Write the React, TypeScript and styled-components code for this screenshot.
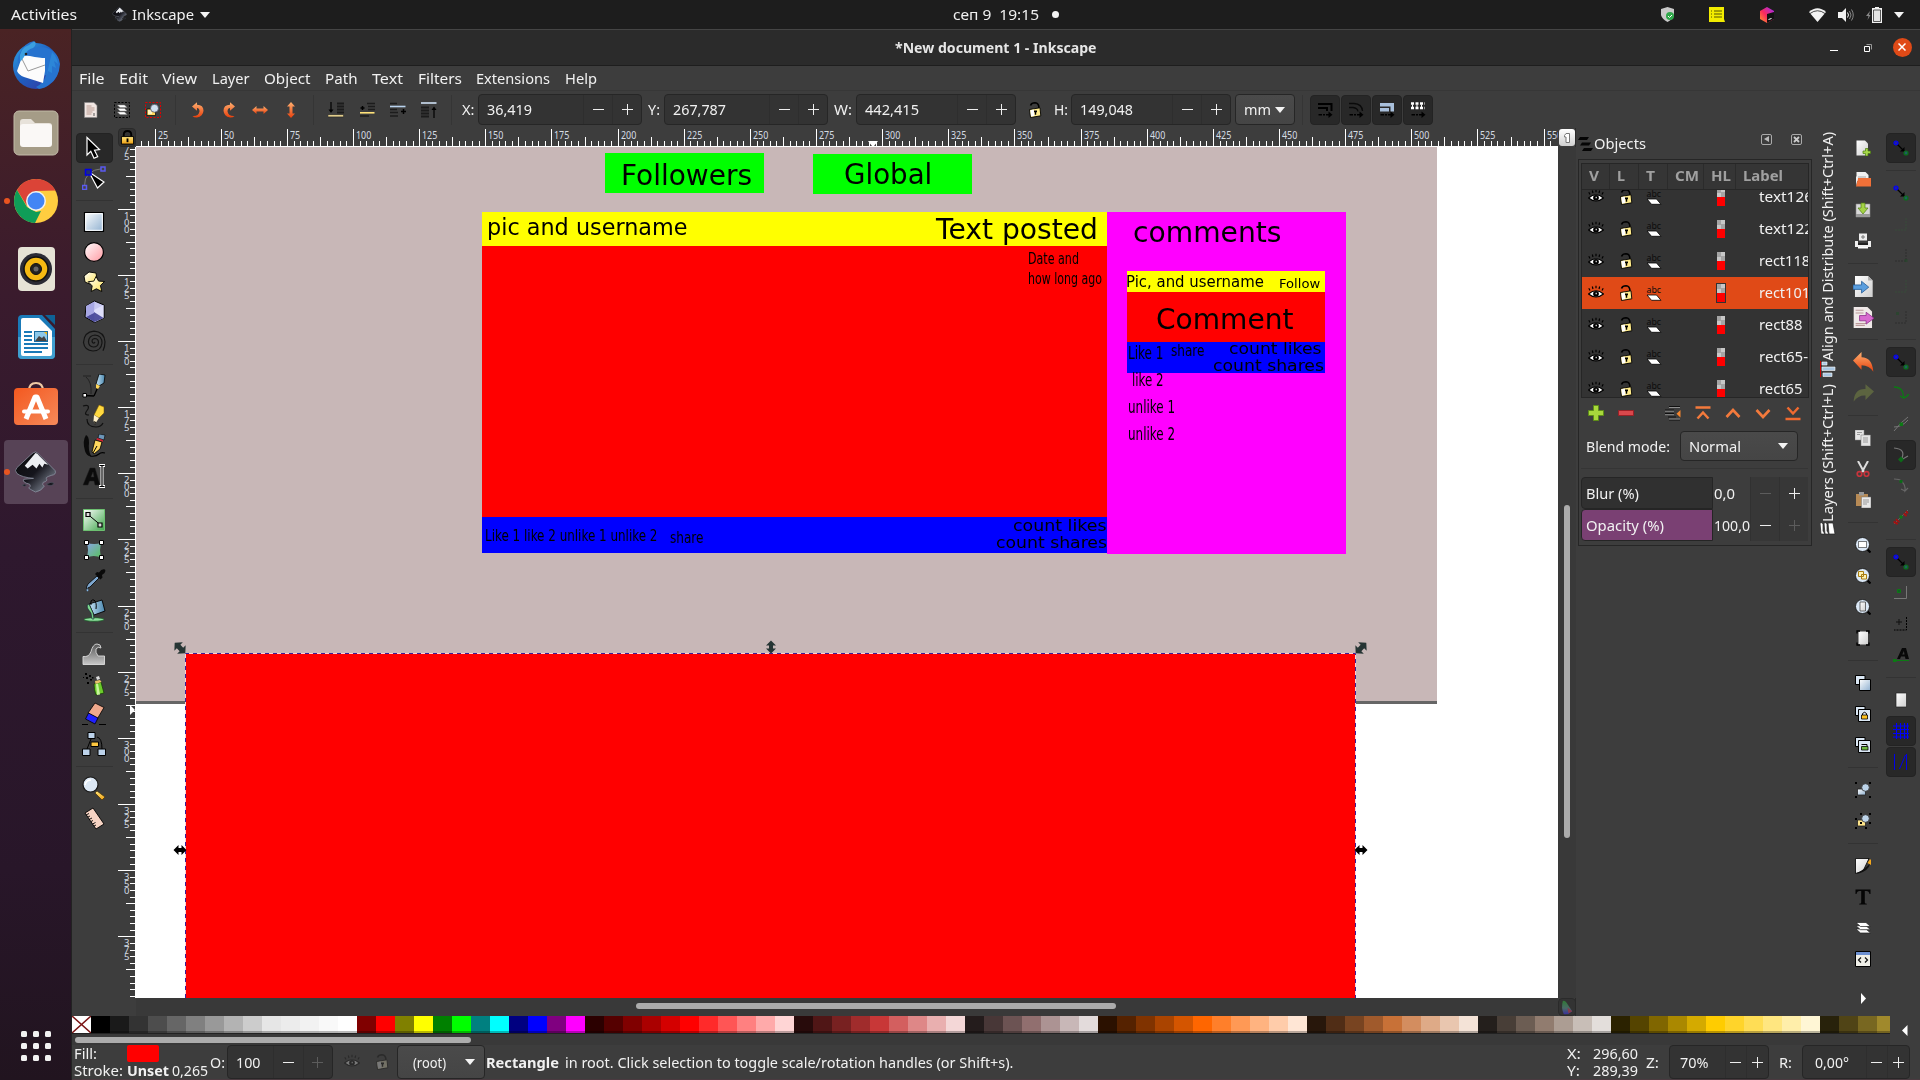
import React, { ReactNode, useLayoutEffect, useRef, useState } from 'react';
import styled, { createGlobalStyle, css } from 'styled-components';

const ui = '"Noto Sans", "Open Sans", sans-serif';
const line = '#262626';

const Global = createGlobalStyle`
  *, *::before, *::after { box-sizing: border-box; }
  html, body { margin: 0; padding: 0; overflow: hidden; background: #3d3d3d; }
  svg { display: block; flex: none; }
`;

/* ---------- text fitted to a given width ---------- */

const FitBox = styled.span<{ $w: number; $size: number; $color: string; $bold?: boolean; $sans?: string }>`
  display: block;
  flex: none;
  width: ${p => p.$w}px;
  font: ${p => (p.$bold ? 700 : 400)} ${p => p.$size}px/1.25 ${p => p.$sans || ui};
  color: ${p => p.$color};
  white-space: pre;
`;
const FitInner = styled.span`
  display: inline-block;
  transform-origin: 0 50%;
`;

type FitProps = { w: number; size?: number; color?: string; bold?: boolean; sans?: string; children: ReactNode };

function Fit({ w, size = 14.5, color = '#f1f1f1', bold, sans, children }: FitProps) {
  const ref = useRef<HTMLSpanElement>(null);
  const [k, setK] = useState(1);
  useLayoutEffect(() => {
    if (ref.current) setK(w / parseFloat(getComputedStyle(ref.current).width));
  }, [w, children]);
  return (
    <FitBox $w={w} $size={size} $color={color} $bold={bold} $sans={sans}>
      <FitInner ref={ref} style={{ transform: `scaleX(${k})` }}>{children}</FitInner>
    </FitBox>
  );
}

/* ---------- icons ---------- */

const K = '#000';
const Defs = () => (
  <svg width="0" height="0" style={{ position: 'absolute' }}>
    <defs>
      <linearGradient id="gBlue" x1="0" y1="0" x2="1" y2="1"><stop offset="0" stopColor="#fff" /><stop offset="1" stopColor="#8fb0d0" /></linearGradient>
      <linearGradient id="gSky" x1="0" y1="0" x2="1" y2="0"><stop offset="0" stopColor="#c4e2f4" /><stop offset="1" stopColor="#4a86ad" /></linearGradient>
      <linearGradient id="gPink" x1="0" y1="0" x2="1" y2="1"><stop offset="0" stopColor="#fff" /><stop offset="1" stopColor="#ff9aa2" /></linearGradient>
      <linearGradient id="gYel" x1="0" y1="0" x2="1" y2="1"><stop offset="0" stopColor="#fff" /><stop offset="1" stopColor="#ffe24e" /></linearGradient>
      <linearGradient id="gOr" x1="0" y1="0" x2="0" y2="1"><stop offset="0" stopColor="#ffb070" /><stop offset="1" stopColor="#e8400c" /></linearGradient>
      <linearGradient id="gGrn" x1="0" y1="0" x2="1" y2="1"><stop offset="0" stopColor="#fff" /><stop offset="1" stopColor="#3fa54b" /></linearGradient>
      <linearGradient id="gMesh" x1="0" y1="0" x2="1" y2="1"><stop offset="0" stopColor="#8aa5e8" /><stop offset="1" stopColor="#58c15c" /></linearGradient>
      <linearGradient id="gGold" x1="0" y1="0" x2="0" y2="1"><stop offset="0" stopColor="#ffe680" /><stop offset="1" stopColor="#f0a010" /></linearGradient>
      <linearGradient id="gGrey" x1="0" y1="0" x2="0" y2="1"><stop offset="0" stopColor="#555" /><stop offset="1" stopColor="#c8c8c8" /></linearGradient>
      <linearGradient id="gDoc" x1="0" y1="0" x2="1" y2="1"><stop offset="0" stopColor="#fff" /><stop offset="1" stopColor="#cfcfcf" /></linearGradient>
      <linearGradient id="gInk" x1="0" y1="0" x2="1" y2="1"><stop offset="0" stopColor="#0a0a0c" /><stop offset=".5" stopColor="#15151c" /><stop offset="1" stopColor="#9aa3b3" /></linearGradient>
      <linearGradient id="gBird" x1="0" y1="0" x2="1" y2="1"><stop offset="0" stopColor="#2ea2e6" /><stop offset=".5" stopColor="#1f5cbe" /><stop offset="1" stopColor="#3a2f9a" /></linearGradient>
      <linearGradient id="gShop" x1="0" y1="0" x2="1" y2="1"><stop offset="0" stopColor="#f4581f" /><stop offset="1" stopColor="#f58a5a" /></linearGradient>
      <linearGradient id="gJb" x1="0" y1="1" x2="1" y2="0"><stop offset="0" stopColor="#ff9a2a" /><stop offset=".45" stopColor="#fb2a5c" /><stop offset="1" stopColor="#9a2bff" /></linearGradient>
      <linearGradient id="gCms" x1="0" y1="0" x2="0" y2="1"><stop offset="0" stopColor="#2f7a35" /><stop offset=".55" stopColor="#4a6a66" /><stop offset="1" stopColor="#3a2f9a" /></linearGradient>
    </defs>
  </svg>
);

const tool: Record<string, ReactNode> = {
  select: <path d="M5 1.500v17.500l3.800-3.700 3.200 7 3.700-1.700-3.200-6.400 5-.6z" fill={K} stroke="#fff" strokeWidth="1.200" />,
  node: <><path d="M2.500 20Q2 4 21 2.500" fill="none" stroke="#777" /><path d="M7 6l15 10-6.500 6z" fill={K} stroke="#fff" strokeWidth="1.200" /><path d="M3.500 3.500h5.500v5.500h-5.500z" fill="#22306e" stroke="#0000e8" strokeWidth="1.500" /><path d="M19 1h4v4h-4zM.5 19.500h4v4h-4z" fill="#444" stroke="#5a5af0" strokeWidth="1.500" /></>,
  rect: <><path d="M2.500 2.500h19v19h-19z" fill="url(#gBlue)" stroke={K} strokeWidth="1.200" /><path d="M3.700 3.700h16.600v16.600H3.700z" fill="none" stroke="#fff" /></>,
  ellipse: <circle cx="12" cy="12" r="9.400" fill="url(#gPink)" stroke={K} strokeWidth="1.200" />,
  star: <><path d="M7 2l7 1 1 6-5 6-7-3-1-6z" fill="url(#gYel)" stroke={K} strokeWidth=".9" /><path d="M14 6.500l2.600 4.600 6 .4-4.200 4 1.400 6-5.400-2.700-5.200 2.700 1-5.600-4-4.200 5.600-.6z" fill="url(#gYel)" stroke={K} strokeWidth=".9" /></>,
  cube: <><path d="M12.500 1l9.500 4v13l-9.500 4.500L3 17 4 6z" fill="#c9c9f2" stroke={K} /><path d="M12 10l9.500-5v13l-9 4.200z" fill="#dedefa" /><path d="M12 12l9.500 6-9 4L4 17z" fill="#30308a" opacity=".8" /><path d="M4 6l8.500-4.500L12 13l-8 4z" fill="#a7a7e4" /></>,
  spiral: <path d="M13 12Q12 14 10.500 12.500 9 9.500 12.500 8.500q4 0 4 4-.5 4.500-5 4.500-5-.5-5-5.500.5-6 6.500-6.500 7 .5 7 8-1 8-9 8Q2.500 20.500 1.500 12.500 2 2 12 1.200q10 .5 11 10.500 0 5-2 9" fill="none" stroke="#141414" strokeWidth="1.200" />,
  bezier: <><path d="M1 2h8M4 3q6 5 5 17" fill="none" stroke="#222" /><path d="M2.500 21.500L12 22M12 22l4-9" stroke={K} strokeWidth="1.300" fill="none" /><path d="M1 19.500h3.500v3.500H1z" fill="#fff" stroke={K} /><path d="M17 0l6 1-1 8-5 3-3-2z" fill="url(#gSky)" stroke={K} strokeWidth=".8" /><path d="M14 10l4 2-2 3-2-1z" fill="#ffd75a" /></>,
  pencil: <><path d="M1 2q7-2 5 3c-3 4-4 6 1 6M5 15q0 8 9 8 5 0 7-4" fill="none" stroke="#111" strokeWidth="1.200" /><path d="M17 1l5 2v6l-4-1z" fill="#ff9a10" /><path d="M17 1l-5 10 5 3 5-5V3z" fill="#ffd940" stroke="#6b4d00" strokeWidth=".5" /><path d="M12 11l5 3-4 6-1.500-3z" fill="#fff0c8" /><path d="M12 17l2 1-1 3z" fill={K} /></>,
  calligraphy: <><path d="M4 1Q0 7 3 17q2 6 6 5-3-6-2-13Q7 2 4 1z" fill="#0a0a0a" /><path d="M8 22q6 1 9-2 2-2 6-1" fill="none" stroke={K} strokeWidth="1.200" /><path d="M17 0l6 1-1 5-6-2z" fill="#6d96b8" stroke={K} strokeWidth=".6" /><path d="M15 4l6 2-.5 2-6-2z" fill="#d02030" /><path d="M13 6l7 2-2 7-6 5-2-2z" fill="#ffd95e" stroke={K} strokeWidth=".8" /><path d="M11 19l4-7" stroke={K} /></>,
  text: <><path d="M1 21L8 4h5l5 17h-5l-1-4H7.500l-1.500 4zM9 13h3l-1-5z" fill="#0b0b0b" stroke="#222" strokeWidth=".5" /><path d="M17 1.500h6M17 22.500h6M20 2v20" stroke="#fff" strokeWidth="3" /><path d="M17.500 1.500h5M17.500 22.500h5M20 2v20" stroke={K} strokeWidth="1.200" /></>,
  gradient: <><path d="M1.500 1.500h21v21h-21z" fill="url(#gGrn)" stroke="#6cc070" /><path d="M6 6.500l12 10" stroke={K} /><path d="M4 4.500h4v4H4zM16 15h4v4h-4z" fill="#ddd" stroke={K} strokeWidth="1.200" /></>,
  mesh: <><path d="M4.500 4.500q8 3 15 0-3 8 0 15-8-3-15 0 3-8 0-15z" fill="url(#gMesh)" /><path d="M2.500 2.500h4v4h-4zM17.500 2.500h4v4h-4zM2.500 17.500h4v4h-4zM17.500 17.500h4v4h-4z" fill="#fff" stroke={K} /></>,
  dropper: <><path d="M15 8l2 2-9 9q-3 1-3 2l-.5-2 1.500-3z" fill="#7fa8d0" stroke={K} strokeWidth=".8" /><path d="M13 6l2-2 2 .5Q20 0 23 1.500q1.500 3-3 5.500l.5 2.500-2 2z" fill="#0a0a0a" /><path d="M5.500 20q-2 3 0 3.500 2-.5 0-3.500z" fill="#8fc1ee" stroke="#234" strokeWidth=".4" /></>,
  bucket: <><ellipse cx="12" cy="21.500" rx="10" ry="1.800" fill="#8ee29e" stroke="#1d5e2a" strokeWidth=".8" /><path d="M7 6l13-4 3 11-11 4z" fill="url(#gSky)" stroke={K} strokeWidth=".9" /><path d="M7 6q-3 1-1 5l3 4 1 6h2l-1-6z" fill="#7edb8f" stroke="#123" strokeWidth=".6" /><path d="M9 7q-1-6 3-5 3 2 2 9" fill="none" stroke={K} /></>,
  tweak: <path d="M1 22.500v-8q6 1 8-5Q11 2 15 2q4 0 4 4-3-2-5 1-1 3 2 7h6.500v8.500z" fill="url(#gGrey)" stroke="#ddd" strokeWidth=".9" />,
  spray: <><path d="M12 12l7-2 3 11-8 2q-2-5-2-11z" fill="#6ccb2c" stroke="#173d05" strokeWidth=".8" /><path d="M14 12l2-.5 2 11-3 .5z" fill="#c8f59c" /><path d="M13 9l5-1 1.500 2-6 2z" fill="#e9c46a" /><path d="M14 5l3-1 1 3-3 1z" fill="#ddd" /><path d="M3 1h2v2H3zM7 3h2v2H7zM4 5h2v2H4zM8 7h2v1.500H8zM5 10h2v2H5zM10 5h1.500v1.500H10zM1 5h1v1H1z" fill={K} /></>,
  eraser: <><path d="M13 1l9 4.500-6.500 11L6 11z" fill="#f0a98c" stroke={K} strokeWidth=".8" /><path d="M6.500 11l9.500 5-3 6L3.500 17z" fill="#2020ff" stroke={K} strokeWidth=".8" /><path d="M0 22.500h6M17 22.500h7" stroke={K} /></>,
  connector: <><path d="M9 7L5 17M15 5q5 1 5 12" stroke={K} fill="none" /><path d="M6 .5h7v6H6zM.5 17h7.500v6.500H.500zM16 17h7.500v6.500H16z" fill="#bcd2ea" stroke={K} /><path d="M9 10h7.500v4.500H9z" fill="#ffc840" stroke={K} /></>,
  zoom: <><path d="M15 15l8 6-3 3-7-7z" fill="url(#gGold)" stroke="#4a3000" strokeWidth=".7" /><circle cx="8.500" cy="8.500" r="7.500" fill="#dce8f5" stroke="#1a1a1a" strokeWidth="1.200" /><path d="M3 9q1-5 6-5" stroke="#fff" fill="none" strokeWidth="1.500" /></>,
  measure: <><path d="M3 7l8-5 11 16-8 5z" fill="#f6d3c3" stroke={K} strokeWidth=".9" /><path d="M4 9l3-1.500M6 11l2-1M7 13.500l3-1.500M9 15.500l2-1M10.500 18l3-1.500M12 20l2-1" stroke={K} strokeWidth=".9" /></>,
};

const lens = (c: ReactNode) => <><path d="M12 12l3.500 3.500" stroke={K} strokeWidth="2.200" /><circle cx="7.500" cy="7.500" r="7" fill="#dbe8f6" stroke="#111" strokeWidth=".8" />{c}</>;
const snap = <><path d="M4 4l7 7" stroke={K} strokeWidth="1.300" /><path d="M7 11.500h4.500V7z" fill={K} /><circle cx="3" cy="3" r="2" fill="#2222a0" stroke="#0000ff" strokeWidth="1.200" /><circle cx="13" cy="13" r="2" fill="#1c6060" stroke="#0c6e1a" strokeWidth="1.200" /></>;
const openLock = <><path d="M3.500 3.500Q4.500.8 8 .8q4 .2 4 5.500" fill="none" stroke={K} strokeWidth="1.600" /><path d="M2.500 7.500l10.500-1.700.8 8L3.500 15.500z" fill="#ffeb8a" stroke={K} strokeWidth=".9" /><path d="M3.300 8.200l3.500-.6.600 6.400-3.300.6z" fill="#fff" /><path d="M7 8.500h3v1.800H9.200v2.500H7.800v-2.500H7z" fill={K} /></>;
const arrowTail = <><path d="M1.500 12.700h3.500M6 12.700h2M9 12.700h3" stroke={K} strokeWidth="1.500" /><path d="M11.500 9.500l4 3.200-4 3.200z" fill={K} /></>;

const small: Record<string, ReactNode> = {
  all: <><path d="M1.500.5h9.500l3 3v12H1.500z" fill="#f1e6e2" stroke="#888" strokeWidth=".6" /><path d="M3.500 4h5M3.500 6h8M3.500 8h8M3.500 10h6M3.500 12h5" stroke="#b99a90" /><path d="M11 11v3" stroke="#555" /></>,
  layers: <><path d="M.5.5h15v15H.5z" fill="none" stroke={K} strokeDasharray="2 1.500" /><path d="M3.500 3h7l2.500 2.500H6zM3.500 6.500h7L13 9H6zM3.500 10h7l2.500 2.500H6z" fill="#fff" stroke="#888" strokeWidth=".5" /></>,
  desel: <><path d="M.5.5h15v15H.5z" fill="none" stroke="#e00000" strokeDasharray="2 1.500" /><path d="M2 7h8.500v6.500H2z" fill="#ffd860" stroke={K} strokeWidth=".7" /><path d="M3 8h4v4H3z" fill="#fff3c0" /><circle cx="9.500" cy="6.300" r="4" fill="#cfe0f0" stroke="#445" strokeWidth=".7" /></>,
  ccw: <path d="M2 4.500L7 .3v2.500q6.500.2 6.500 6Q13 14.500 7 15.500q-3 .2-4.500-1.500 6 .5 7-4.500Q9.500 6 7 6v2.700z" fill="url(#gOr)" />,
  cw: <path d="M14 4.500L9 .3v2.500q-6.500.2-6.500 6Q3 14.500 9 15.500q3 .2 4.500-1.500-6 .5-7-4.500Q6.500 6 9 6v2.700z" fill="url(#gOr)" />,
  fliph: <path d="M0 8l4.500-4v2.500h7V4L16 8l-4.500 4V9.500h-7V12z" fill="url(#gOr)" />,
  flipv: <path d="M8 0l4 4.500H9.500v7H12L8 16l-4-4.500h2.500v-7H4z" fill="url(#gOr)" />,
  bottom: <><path d="M9 1.500h7M9 4.500h7M9 7.500h7M9 10.500h7" stroke="#1c1c1c" strokeWidth="1.800" /><path d="M3 0v9" stroke={K} strokeWidth="1.200" /><path d="M.5 7.500h5L3 11z" fill={K} /><path d="M0 12.800h15.500v2H0z" fill="#ffe9a0" stroke={K} strokeWidth=".4" /></>,
  lower: <><path d="M8 1.500h8M9 4.500h7M9 7.500h7M1 14h9" stroke="#1c1c1c" strokeWidth="1.600" /><path d="M1 10.800h14.500" stroke="#ffe27a" strokeWidth="1.600" /><path d="M1.500 6h4M3.500 4v4" stroke={K} strokeWidth="1.500" /></>,
  raise: <><path d="M0 1.500h7M0 7.500h7M0 10.500h8M0 14h8" stroke="#1c1c1c" strokeWidth="1.600" /><path d="M0 4.500h15.500" stroke="#b9d2ee" strokeWidth="1.600" /><path d="M11 9.500h5M13.500 7v5" stroke={K} strokeWidth="1.500" /></>,
  top: <><path d="M0 5.500h8M0 8.500h8M0 11.500h8M0 14.500h8" stroke="#1c1c1c" strokeWidth="1.800" /><path d="M0 1h15.500" stroke="#cfe0f4" strokeWidth="1.600" /><path d="M13 6v10" stroke={K} strokeWidth="1.200" /><path d="M10.500 8h5L13 4.500z" fill={K} /></>,
  unlock: openLock,
  a1: <><path d="M1 2h13.500v7M1 6h9v3" fill="none" stroke={K} strokeWidth="2" />{arrowTail}</>,
  a2: <><path d="M1 1.500h5q8 .5 8.500 7.500M1 5.500h4q4.500.5 5 4" fill="none" stroke="#0a0a0a" strokeWidth="1.300" />{arrowTail}</>,
  a3: <><path d="M1 1h14v8.500h-3.500V4.500H1zM1 6h9v3.500H1z" fill="#a9c0dc" />{arrowTail}</>,
  a4: <><path d="M1 1.500h14M1 6h14" stroke="#fff" strokeWidth="2.400" strokeDasharray="3 1.500" /><path d="M2 3.700h13" stroke="#fff" strokeDasharray="1 3.500" strokeWidth="2.500" />{arrowTail}</>,
  new: <><path d="M1.500.5h8.500l3 3v12H1.500z" fill="url(#gDoc)" /><path d="M10.500 8.500h2.500V11h2.500v2.500H13V16h-2.500v-2.500H8V11h2.500z" fill="#a6d84a" stroke="#4b7c10" strokeWidth=".7" /></>,
  open: <><path d="M1.500 1h9l3 3v6h-12z" fill="#f1f1f1" /><path d="M3 5h8v5H3z" fill="#ccc" /><path d="M1 15.500L3 7h13v8.500z" fill="#f07038" /><path d="M1 14.500V5l2 2z" fill="#eee" /></>,
  save: <><path d="M1 2h14v13H1z" fill="#d9d9d9" stroke="#888" strokeWidth=".6" /><path d="M1 12h14v3H1z" fill="#9a9a9a" /><path d="M6 1h4v5h3l-5 6-5-6h3z" fill="#a4d445" stroke="#4e7d12" strokeWidth=".7" /></>,
  print: <><path d="M4 .5h8v7H4z" fill="#eee" /><path d="M8 2v4M6 4h4" stroke="#777" /><path d="M0 8h3v2h10V8h3v6H0z" fill="#f0f0f0" /><path d="M3 10h10v2H3z" fill="#222" /><path d="M3 14h10v1.500H3z" fill="#fff" /></>,
  undo: <path d="M0 6.500L6.500 0v4q8 0 9 11-3-5-9-5v3.500z" fill="url(#gOr)" />,
  redo: <path d="M16 6.500L9.500 1v3.500Q1 4 .5 14q4-5 9-4.500V13z" fill="#5c6440" />,
  copy: <><path d="M0 0h9v10H0z" fill="#e5e5e5" stroke="#888" strokeWidth=".5" /><path d="M6 5h9.500v11H6z" fill="#e5e5e5" stroke="#777" strokeWidth=".5" /><path d="M2 2.500h5M2 4.500h3M8 8h5M8 10h5M8 12h5" stroke="#999" /></>,
  cut: <><path d="M3 0l6 11M13 0L7 11" stroke="#ddd" strokeWidth="2" /><circle cx="4.500" cy="13" r="2.300" fill="none" stroke="#c8343c" strokeWidth="1.700" /><circle cx="11.500" cy="13" r="2.300" fill="none" stroke="#c8343c" strokeWidth="1.700" /></>,
  paste: <><path d="M1 2h12v12H1z" fill="#b78a55" /><path d="M4 0h5v3.500H4z" fill="#999" /><path d="M6.500 5H16v11H6.500z" fill="#e9e9e9" stroke="#777" strokeWidth=".5" /><path d="M8 8h6M8 10h6M8 12h4" stroke="#999" /></>,
  zsel: lens(<path d="M3.500 4.500h8v6h-8z" fill="#fff" stroke={K} strokeDasharray="1 1" />),
  zdraw: lens(<path d="M3.500 3.500h5v5h-5zM6.500 6.500h5v4.500h-5z" fill="#fff2b0" stroke="#a87c10" />),
  zpage: lens(<path d="M5 3h5.500v9H5z" fill="url(#gDoc)" stroke="#333" strokeWidth=".7" />),
  zfit: <><path d="M3.500 1.500h9.500v13H3.500z" fill="url(#gDoc)" /><path d="M2 3.500V1h3M11 1h3v2.500M2 12.500V15h3M11 15h3v-2.500" fill="none" stroke={K} strokeWidth="1.300" /></>,
  dup: <><path d="M.5.5h9.500v9H.5z" fill="#dbe8f5" stroke={K} /><path d="M4.500 4.500h11v11h-11z" fill="url(#gBlue)" stroke={K} /></>,
  clone: <><path d="M.5.5h9.500v9H.5z" fill="#dbe8f5" stroke={K} /><path d="M3.500 3.500h12v12h-12z" fill="#dbe8f5" stroke={K} /><path d="M7.500 9V7.500q2-2.500 4 0V9" fill="none" stroke={K} /><path d="M6.500 9h6v4h-6z" fill="#ffc21f" stroke={K} strokeWidth=".8" /></>,
  unclone: <><path d="M.5.5h9.500v9H.5z" fill="#dbe8f5" stroke={K} /><path d="M3.500 3.500h12v12h-12z" fill="#dbe8f5" stroke={K} /><path d="M6.500 7.500h5.500V9" fill="none" stroke={K} /><path d="M6.500 9.500h6.500v3.500H6.500z" fill="#6cb840" stroke={K} strokeWidth=".8" /></>,
  group: <><path d="M0 0h2v2H0zM14 0h2v2h-2zM0 14h2v2H0zM14 14h2v2h-2z" fill={K} /><path d="M2.500 7h8v6h-8z" fill="url(#gBlue)" stroke="#222" strokeWidth=".8" /><circle cx="10.500" cy="5.500" r="3.800" fill="#bdd4ea" stroke="#333" strokeWidth=".8" /></>,
  ungroup: <><path d="M5 0h2v2H5zM14 0h2v2h-2zM0 14h2v2H0zM14 9h2v2h-2zM0 5h2v2H0zM10 14h2v2h-2z" fill={K} /><path d="M2.500 7h8v6h-8z" fill="#ffe58a" stroke="#222" strokeWidth=".8" /><circle cx="10.500" cy="5.500" r="3.800" fill="#bdd4ea" stroke="#333" strokeWidth=".8" /><path d="M5 9h2v2H5z" fill={K} /></>,
  fill: <><path d="M.5.5H14L8 13 .5 15.500z" fill="url(#gDoc)" stroke={K} strokeWidth=".8" /><path d="M15.500 5q-2 8-12 10.500H1Q9 12 15.500 5z" fill="#111" /><path d="M12.500 5l2.500-4 1 1v5z" fill="#f5a81c" /></>,
  glyph: <path d="M.5.5h15v4.500h-1q-.5-3-3-3H9.800v11.500q0 1.200 2 1.200v.8H4.200v-.8q2 0 2-1.200V2H4.500q-2.500 0-3 3h-1z" fill="#050505" />,
  stack: <><path d="M1 9h10l4.500 4H5.500z" fill="#fff" stroke="#222" strokeWidth=".7" /><path d="M1 5.700h10l4.500 4H5.500z" fill="#fff" stroke="#222" strokeWidth=".7" /><path d="M1 2.500h10l4.500 4H5.500z" fill="#fff" stroke="#222" strokeWidth=".7" /></>,
  xml: <><path d="M.5.5h15v15H.5z" fill="#efefe8" stroke={K} /><path d="M1 1h14v3H1z" fill="#6c8fd0" /><path d="M6 6.500L3.500 9 6 11.500M10 6.500L12.500 9 10 11.500" fill="none" stroke="#111" strokeWidth="1.200" /></>,
  import: <><path d="M1.500 0h10l3.500 3.500V16H1.500z" fill="url(#gDoc)" /><path d="M11.500 0v3.500H15z" fill="#aaa" /><path d="M0 6.800h6.500V4L12 8.500 6.500 13v-2.800H0z" fill="#5a9ede" stroke="#245c96" strokeWidth=".6" /></>,
  export: <><path d="M.5 0H11l3.500 3.500V16H.5z" fill="#efe9e8" /><path d="M2 2.500h6M2 4.500h6M2 12.500h8M2 14h7" stroke="#b99" strokeWidth=".8" /><path d="M5 6.500h5V4l6 4.500-6 4.500v-2.500H5z" fill="#d86ad0" stroke="#8c2c88" strokeWidth=".6" /></>,
  snap,
  dim1: <path d="M13 2v12H1" fill="none" stroke="#37523a" strokeDasharray="2 1" opacity=".7" />,
  dim2: <><path d="M13 2v12H1" fill="none" stroke="#222" strokeDasharray="2 1" opacity=".5" /><path d="M11.500 12h3v3h-3z" fill="#214a28" opacity=".6" /></>,
  dim3: <><path d="M13 2v12H1" fill="none" stroke="#222" strokeDasharray="2 1" opacity=".5" /><path d="M3 3h3v3H3z" fill="#214a28" opacity=".6" /></>,
  path: <path d="M1 2q10 0 9.500 11l-3.500-2M10.500 13q4-1 5-4" fill="none" stroke="#0c7a14" strokeWidth="1.300" />,
  cross: <><path d="M1 15Q8 6 15 1M1 11q8 0 14-7" fill="none" stroke="#777" /><path d="M6.500 6.500h3.500v3.500H6.500z" fill="#0c7a14" /></>,
  cusp: <><path d="M1 1q13 1 7 12M8 13l7-4" fill="none" stroke="#777" strokeWidth="1.200" /><path d="M8 9.500l3 3-3 3-3-3z" fill="#0c6a18" /></>,
  smooth: <><path d="M1 1q6 0 7 2 5 4 4 10l3-3M12 13l-4-2" fill="none" stroke="#666" strokeWidth="1.200" /><path d="M6.500 2h3v3h-3z" fill="#0c6a18" /></>,
  mid: <><path d="M1 15L15 1" stroke="#666" /><path d="M1 14l4-4M11 6l4-4M3 15l3-3M12 7l2-3" stroke="#a81010" strokeWidth="2.600" strokeDasharray="2 1" /><path d="M6.500 6.500h3v3h-3z" fill="#0c7a14" /></>,
  s1: <><path d="M13.500 1v12.500H1" fill="none" stroke="#777" /><path d="M4.500 4.500h3v3h-3z" fill="#0f5f22" stroke="#0c7a14" /></>,
  s2: <><path d="M13.500 1v13H1" fill="none" stroke={K} strokeDasharray="2 1" /><path d="M3 6h6M6 3v6" stroke="#111" /></>,
  s3: <><path d="M4 12L9 1h4l3 11h-3.500l-.6-2.500H8L7 12zM9.300 7.500h2.200l-.6-3.500z" fill="#080808" /><path d="M2 13.500h14" stroke="#0c7a14" /><path d="M0 12h3.500v3H0z" fill="#0c7a14" /></>,
  page: <path d="M3 1h10.500v14H3z" fill="url(#gDoc)" stroke="#222" strokeWidth=".7" />,
  grid: <path d="M3.500 0v16M7.500 0v16M11.500 0v16M14.500 0v16M0 3h16M0 6.500h16M0 10.500h16M0 14h16" stroke="#0000ff" strokeWidth="1.100" />,
  guide: <path d="M1.500 0v16M13.500 0v16M6.500 15l6-14" stroke="#0000e8" strokeWidth="1" />,
  eye: <><path d="M.5 9Q8 2.500 15.500 9 8 15 .5 9z" fill="#fff" stroke={K} strokeWidth="1.200" /><circle cx="8" cy="8.800" r="2.900" fill={K} /><path d="M7.500 7.800h1.500v1.500H7.500z" fill="#bbb" /><path d="M2 5.500L.8 3.300M5 4l-.7-2.500M8 3.300V.8M11 4l.7-2.500M14 5.500l1.200-2.200" stroke={K} strokeWidth="1.200" /></>,
  plus: <path d="M5.500.5h5v5h5v5h-5v5h-5v-5h-5v-5h5z" fill="#a9d83c" stroke="#5e8d18" />,
  minus: <path d="M.5 5.500h15v5H.5z" fill="#d9484c" stroke="#9a2026" />,
  collapse: <><path d="M4 1.500h11M0 5.200h9M0 8.700h9M3 12h8M4 15h11" stroke="#101010" strokeWidth="1.200" /><path d="M4 2.500h11M0 6.200h9M0 9.700h9M4 14h11" stroke="#999" strokeWidth=".9" /><path d="M15.500 5v7.500L11.500 8.700z" fill="#f5862e" /></>,
  toTop: <path d="M.5 2.500h15M2.500 13.500l5.500-6 5.500 6" fill="none" stroke="#f47a3c" strokeWidth="2.500" />,
  up: <path d="M1.500 12L8 5l6.500 7" fill="none" stroke="#f47a3c" strokeWidth="2.600" />,
  down: <path d="M1.500 5L8 12l6.500-7" fill="none" stroke="#f47a3c" strokeWidth="2.600" />,
  toBottom: <path d="M.5 14h15M2.500 2.500l5.500 6 5.500-6" fill="none" stroke="#f06a30" strokeWidth="2.500" />,
  cms: <><path d="M3 1q2-1 4 2l6 9q-4 4-9 3Q1 8 3 1z" fill="url(#gCms)" /><path d="M8 8l5 4-4 2z" fill="#8a3a4a" /></>,
  redLock: <><path d="M4 7V5q0-4 4-4t4 4v2" fill="none" stroke={K} strokeWidth="2" /><path d="M1.500 7h13v8h-13z" fill="url(#gGold)" stroke={K} /><path d="M7 9h2v4H7z" fill={K} /></>,
};

const ToolIcon = ({ n }: { n: string }) => <svg width="24" height="24" viewBox="0 0 24 24">{tool[n]}</svg>;
const Icon = ({ n, s = 16 }: { n: string; s?: number }) => <svg width={s} height={s} viewBox="0 0 16 16">{small[n]}</svg>;
const Caret = () => <svg width="10" height="6" viewBox="0 0 10 6"><path d="M0 0h10L5 6z" fill="#f4f4f4" /></svg>;
const Minus = ({ dim }: { dim?: boolean }) => <svg width="11" height="11" viewBox="0 0 11 11"><path d="M0 5.500h11" stroke={dim ? '#5c5c5c' : '#eee'} /></svg>;
const Plus = ({ dim }: { dim?: boolean }) => <svg width="11" height="11" viewBox="0 0 11 11"><path d="M0 5.500h11M5.500 0v11" stroke={dim ? '#5c5c5c' : '#eee'} /></svg>;

/* ---------- desktop shell ---------- */

const Screen = styled.div`width: 1920px; height: 1080px; display: flex; flex-direction: column; overflow: hidden; background: #3d3d3d; font-family: ${ui};`;
const TopBar = styled.header`height: 29px; flex: none; display: flex; align-items: center; background: #1d1d1d;`;
const Gap = styled.span<{ $w: number }>`flex: none; width: ${p => p.$w}px;`;
const Push = styled.span`flex: 1;`;
const Dot = styled.span`width: 7px; height: 7px; border-radius: 50%; background: #f4f4f4;`;
const Desktop = styled.div`flex: 1; min-height: 0; display: flex;`;
const Dock = styled.nav`width: 72px; flex: none; display: flex; flex-direction: column; align-items: center; padding-top: 4px; gap: 3.900px; background: linear-gradient(#4a2324, #3a1b2d 25%, #2e182e 50%, #281629 80%, #21141f); border-right: 1px solid #222;`;
const DockItem = styled.div<{ $on?: boolean; $dot?: boolean }>`
  width: 64px; height: 64px; flex: none; display: flex; align-items: center; justify-content: center; border-radius: 4px; position: relative;
  background: ${p => (p.$on ? '#574356' : 'transparent')};
  ${p => p.$dot && css`&::before { content: ''; position: absolute; left: 0; top: 29px; width: 6px; height: 6px; border-radius: 50%; background: #e95420; }`}
`;
const AppGrid = styled.div`margin: auto 0 19px; display: grid; grid-template-columns: repeat(3, 6px); grid-auto-rows: 6px; gap: 6px;`;
const GridDot = styled.i`border-radius: 1.500px; background: #f2f2f2;`;

const Win = styled.main`flex: 1; min-width: 0; display: flex; flex-direction: column; border-top: 1px solid #454545;`;
const TitleBar = styled.div`height: 36px; flex: none; display: flex; align-items: center; background: #2b2b2b; border-bottom: 1px solid #1e1e1e;`;
const Close = styled.span`width: 19px; height: 19px; border-radius: 50%; background: #e04a17; display: flex; align-items: center; justify-content: center; margin: 0 8.500px 1px 0;`;
const MenuBar = styled.div`height: 25px; flex: none; display: flex; align-items: center; gap: 14.600px; padding: 1px 0 0 6.500px; border-bottom: 1px solid #373737;`;
const ToolBar = styled.div`height: 37px; flex: none; display: flex; align-items: center; padding-left: 3.500px;`;
const Slot = styled.span<{ $w: number }>`width: ${p => p.$w}px; flex: none; display: flex; justify-content: center; align-items: center;`;
const VSep = styled.span<{ $w?: number }>`width: ${p => p.$w || 14}px; flex: none; display: flex; justify-content: center; &::before { content: ''; width: 1px; height: 30px; background: #353535; }`;
const Tag = styled.span<{ $w: number; $pl: number }>`width: ${p => p.$w}px; flex: none; padding-left: ${p => p.$pl}px;`;

const SpinBox = styled.div<{ $w: number; $h?: number }>`width: ${p => p.$w}px; height: ${p => p.$h || 31}px; flex: none; display: flex; align-items: center; background: #333; border: 1px solid ${line}; border-radius: 4px;`;
const SpinVal = styled.span<{ $pl: number }>`flex: 1; padding-left: ${p => p.$pl}px;`;
const SpinBtn = styled.span<{ $w: number }>`width: ${p => p.$w}px; align-self: stretch; flex: none; display: flex; align-items: center; justify-content: center; border-left: 1px solid #2e2e2e;`;
type SpinProps = { w: number; h?: number; bw: number; pl: number; tw: number; v: string; dimPlus?: boolean };
const Spin = ({ w, h, bw, pl, tw, v, dimPlus }: SpinProps) => (
  <SpinBox $w={w} $h={h}><SpinVal $pl={pl}><Fit w={tw}>{v}</Fit></SpinVal><SpinBtn $w={bw}><Minus /></SpinBtn><SpinBtn $w={bw}><Plus dim={dimPlus} /></SpinBtn></SpinBox>
);
const Combo = styled.div<{ $w: number; $h?: number; $pl: number; $pr: number }>`width: ${p => p.$w}px; height: ${p => p.$h || 31}px; flex: none; display: flex; align-items: center; justify-content: space-between; padding: 0 ${p => p.$pr}px 0 ${p => p.$pl}px; background: linear-gradient(#4a4a4a, #454545); border: 1px solid ${line}; border-radius: 4px;`;
const Toggle = styled.span<{ $on?: boolean; $w?: number }>`
  width: ${p => p.$w || 30}px; height: 30px; flex: none; display: flex; align-items: center; justify-content: center; border-radius: 4px; border: 1px solid transparent;
  ${p => p.$on && css`background: #282828; border-color: #232323;`}
`;
const ToggleRow = styled.div`display: flex; gap: 1px;`;

const Work = styled.div`height: 888px; flex: none; display: flex;`;
const ToolBox = styled.div`width: 46px; flex: none; padding: 4.500px 0 0 4px; display: flex; flex-direction: column; & svg { margin-right: 2px; }`;
const ToolSep = styled.hr`width: 37px; height: 14px; margin: 0; border: 0; flex: none; background: linear-gradient(#333, #333) 0 7px / 100% 1px no-repeat;`;

const Stage = styled.section`width: 1458px; flex: none; display: grid; grid-template: 19px 851px 18px / 18px 1422px 18px; border-right: 1px solid #2a2a2a;`;
const Corner = styled.div`display: flex; align-items: center; justify-content: center; border: 1px solid #2a2a2a; border-radius: 4px; background: #333;`;
const Sticky = styled.div`display: flex; align-items: center; justify-content: center; margin: 1px; border-radius: 3px; background: linear-gradient(#fff, #d0d0d0);`;
const Trough = styled.div<{ $v?: boolean }>`background: #393939; padding: ${p => (p.$v ? '358px 0 0 6px' : '5px 0 0 500px')};`;
const Thumb = styled.div<{ $w: number; $h: number }>`width: ${p => p.$w}px; height: ${p => p.$h}px; border-radius: 4px; background: #acacac;`;

/* The drawing: free canvas, coordinates are relative to its top left corner. */
const Canvas = styled.div`position: relative; overflow: hidden; background: #fff;`;
const Page = styled.div`position: absolute; left: 0; top: 0; width: 1300.500px; height: 557px; background: #c8b7b7; border-bottom: 3px solid #666;`;
const Shape = styled.div<{ $x: number; $y: number; $w: number; $h: number; $c: string }>`
  position: absolute; left: ${p => p.$x - 136}px; top: ${p => p.$y - 147}px; width: ${p => p.$w}px; height: ${p => p.$h}px; background: ${p => p.$c};
`;
const Written = styled.div<{ $x: number; $y: number; $s: number }>`position: absolute; left: ${p => p.$x - 136 - p.$s * 0.045}px; top: ${p => p.$y - 147 - p.$s * 0.965}px;`;
const Outline = styled.svg`position: absolute; left: 49px; top: 506px;`;
const Handle = styled.svg<{ $x: number; $y: number; $r: number }>`position: absolute; left: ${p => p.$x - 144}px; top: ${p => p.$y - 155}px; transform: rotate(${p => p.$r}deg);`;

const shapes: [number, number, number, number, string][] = [
  [605, 153.300, 159, 39.700, '#00ff00'], [812.600, 154, 159, 40, '#00ff00'],
  [482, 212, 625, 34, '#ffff00'], [481.600, 246, 625.600, 271, '#ff0000'], [481.600, 516.700, 625.600, 36.500, '#0000ff'],
  [1107, 212, 239, 342, '#ff00ff'],
  [1126.700, 271.300, 198.600, 21, '#ffff00'], [1126.700, 292, 198.600, 50, '#ff0000'], [1127, 342, 197.500, 31, '#0000ff'],
];
const words: [string, number, number, number, number][] = [
  ['Followers', 622, 750.500, 185, 28], ['Global', 845.700, 931.500, 184, 28], ['pic and username', 488, 686.500, 235.300, 23],
  ['Text posted', 937, 1096.500, 238.300, 27.500], ['comments', 1134, 1280, 242, 28],
  ['Date and', 1028.500, 1078, 264, 16], ['how long ago', 1028.500, 1101, 284, 16],
  ['Pic, and username', 1126.500, 1263, 287.300, 15], ['Follow', 1280, 1320, 288.300, 13], ['Comment', 1157, 1292, 329, 28],
  ['Like 1', 1128.500, 1162.500, 359.300, 17], ['share', 1172, 1204, 356.700, 16.500], ['count likes', 1229.500, 1320.500, 355, 16.500],
  ['count shares', 1213.500, 1323, 372.300, 16.500], ['like 2', 1132.500, 1162.500, 386.500, 17], ['unlike 1', 1128.500, 1174, 413.200, 17], ['unlike 2', 1128.500, 1174, 440.200, 17],
  ['Like 1 like 2 unlike 1 unlike 2', 486, 657, 541, 16], ['share', 670.500, 702.500, 543, 16],
  ['count likes', 1013.500, 1105.500, 532.300, 16.500], ['count shares', 996.500, 1106, 549, 16.500],
];
const handles: [number, number, number, string][] = [
  [179.500, 647.500, 45, '#263534'], [770.500, 647, 90, '#263534'], [1361, 647.500, -45, '#263534'], [179.500, 850, 0, '#000'], [1361, 850, 0, '#000'],
];

function HRuler() {
  const ticks: ReactNode[] = [];
  for (let i = -3; i < 212; i++) {
    const x = Math.floor(155.100 + i * 6.61445) - 136;
    if (x < 0 || x > 1421) continue;
    const h = i % 10 === 0 ? 17 : i % 5 === 0 ? 9 : 5;
    ticks.push(<path key={i} d={`M${x + .5} 18V${18 - h}`} stroke="#fff" />);
    if (i % 10 === 0) ticks.push(<text key={'t' + i} x={x + 3} y="10.500" fontSize="10" fill="#d5dce4" fontFamily={ui} textLength={String(25 + i * 2.5).length * 5.100} lengthAdjust="spacingAndGlyphs">{25 + i * 2.5}</text>);
  }
  return <svg width="1422" height="19">{ticks}<path d="M0 18.500h1422" stroke="#fff" /><path d="M732 13h10l-4 5h-2z" fill="#fff" /></svg>;
}
function VRuler() {
  const ticks: ReactNode[] = [];
  for (let i = -10; i < 120; i++) {
    const y = Math.floor(209.200 + i * 6.61445) - 147;
    if (y > 850) break;
    const h = i % 10 === 0 ? 17 : i % 5 === 0 ? 9 : 5;
    ticks.push(<path key={i} d={`M17 ${y + .5}H${17 - h}`} stroke="#fff" />);
    if (i % 10 === 0) String(100 + i * 2.5).split('').forEach((d, j) => ticks.push(<text key={`${i}-${j}`} x="6" y={y + 9.500 + j * 7.300} fontSize="9.500" fill="#d5dce4" fontFamily={ui}>{d}</text>));
  }
  return <svg width="18" height="851">{ticks}<path d="M17.500 0v851" stroke="#fff" /><path d="M12 558l5 5-5 5z" fill="#fff" /></svg>;
}

/* ---------- objects panel ---------- */

const Panel = styled.aside`width: 236px; flex: none; display: flex; flex-direction: column; padding: 0 0 0 2px;`;
const PanelHead = styled.div`height: 31px; flex: none; display: flex; align-items: center;`;
const SmallBtn = styled.span`width: 11px; height: 11px; border: 1px solid #aaa; border-radius: 2px; display: flex; align-items: center; justify-content: center; margin-bottom: 9px;`;
const Frame = styled.div`width: 234px; height: 387px; border: 1px solid ${line}; padding: 3px 3px 0 2px; display: flex; flex-direction: column;`;
const Table = styled.div`width: 228px; height: 235px; flex: none; border: 1px solid ${line}; background: #333; overflow: hidden; display: flex; flex-direction: column;`;
const THead = styled.div`height: 26px; flex: none; display: grid; grid-template-columns: 28px 29px 29px 36px 32px 1fr; background: #353535; border-bottom: 1px solid #272727; z-index: 1;`;
const Th = styled.span`padding: 3px 0 0 6.500px; border-right: 1px solid #2b2b2b; &:last-child { border: 0; }`;
const TBody = styled.div`flex: 1; min-height: 0; overflow: hidden; display: flex; flex-direction: column; & > :first-child { margin-top: -9px; }`;
const Tr = styled.div<{ $on?: boolean }>`height: 32px; flex: none; display: grid; grid-template-columns: 28px 32px 22px 61px 26px 1fr; align-items: center; padding-bottom: 1px; background: ${p => (p.$on ? '#e04a17' : 'transparent')}; & > :first-child, & > :nth-child(2) { justify-self: center; }`;
const TypeCell = styled.span`display: flex; flex-direction: column; align-items: flex-start; padding: 0 0 0 4px;`;
const HighlightCell = styled.span`justify-self: end;`;
const Highlight = styled.span<{ $on?: boolean }>`display: block; width: 8px; height: 18px; background: linear-gradient(#ff0000, #ff0000) 0 9px / 8px 9px no-repeat, conic-gradient(#c8c8c8 25%, #a5a5a5 0 50%, #c8c8c8 0 75%, #a5a5a5 0) 0 0 / 8px 9px; outline: ${p => (p.$on ? '1px solid #333' : 'none')};`;
const LabelCell = styled.span`justify-self: start; padding-left: 8px;`;
const Actions = styled.div`height: 30px; flex: none; display: flex; align-items: center;`;
const Blend = styled.div`height: 36px; flex: none; display: flex; align-items: center; padding-left: 5px; gap: 10px;`;
const HRule = styled.hr`width: 227px; height: 1px; border: 0; margin: 4px 0 8px; flex: none; background: #353535;`;
const Slider = styled.div<{ $full?: boolean }>`height: 32px; flex: none; display: flex; align-items: center; & > :first-child { width: 132px; height: 32px; display: flex; align-items: center; padding-left: 4px; border: 1px solid #252525; border-radius: 4px 0 0 4px; background: ${p => (p.$full ? '#7a4073' : '#303030')}; }`;
const SliderVal = styled.span`width: 37px; flex: none; padding-left: 1px;`;
const SliderBtn = styled.span`width: 29px; height: 32px; flex: none; display: flex; align-items: center; justify-content: center; border-left: 1px solid #313131; background: #373737;`;

const Tabs = styled.div`width: 34px; flex: none; display: flex; flex-direction: column; align-items: center; padding: 4px 3px 0 0;`;
const TabText = styled.div<{ $h: number }>`width: 20px; height: ${p => p.$h}px; flex: none; & > span { transform-origin: 0 0; transform: translateY(${p => p.$h}px) rotate(-90deg); }`;
const Strip = styled.div<{ $w: number }>`width: ${p => p.$w}px; flex: none; display: flex; flex-direction: column; align-items: center; padding-top: 5px;`;
const StripCell = styled.span<{ $on?: boolean }>`width: 30px; height: 30px; margin-bottom: 1px; flex: none; display: flex; align-items: center; justify-content: center; border-radius: 4px; background: ${p => (p.$on ? '#282828' : 'transparent')}; border: 1px solid ${p => (p.$on ? '#232323' : 'transparent')};`;
const StripSep = styled.hr`width: 30px; height: 14px; margin: 0; border: 0; flex: none; background: linear-gradient(#333, #333) 0 6px / 100% 1px no-repeat;`;

const Palette = styled.div`height: 18px; flex: none; display: flex; align-items: center; & > :last-child { margin-top: 11px; }`;
const Swatches = styled.div`width: 1818px; height: 18px; overflow: hidden; display: flex; border-bottom: 1px solid #222;`;
const Swatch = styled.i<{ $c: string }>`width: 19px; flex: none; background: linear-gradient(transparent 15px, rgba(0,0,0,.28) 15px), ${p => p.$c};`;
const PaletteScroll = styled.div`height: 11px; flex: none; width: 1818px; background: #393939; padding: 3px 0 0 3px;`;
const Status = styled.footer`flex: 1; display: flex; align-items: center; border-bottom: 1px solid #4a3a40;`;
const FillStroke = styled.div`width: 138px; flex: none; display: flex; flex-direction: column; padding-left: 2px;`;
const FsRow = styled.div`height: 17px; display: flex; align-items: center;`;
const FillColor = styled.span`width: 32px; height: 17px; border-radius: 2px; background: #f00;`;
const Coord = styled.div`width: 79px; flex: none;`;
const Faded = styled.span`opacity: .3; display: flex; filter: grayscale(.6);`;

const palette = '000000 1a1a1a 333333 4d4d4d 666666 808080 999999 b3b3b3 cccccc e6e6e6 ececec f2f2f2 f9f9f9 ffffff 800000 ff0000 808000 ffff00 008000 00ff00 008080 00ffff 000080 0000ff 800080 ff00ff 2b0000 550000 800000 aa0000 d40000 ff0000 ff2a2a ff5555 ff8080 ffaaaa ffd5d5 280b0b 501616 782121 a02c2c c83737 d35f5f de8787 e9afaf f4d7d7 241c1c 483737 6c5353 916f6f ac9393 c8b7b7 e3dbdb 2b1100 552200 803300 aa4400 d45500 ff6600 ff7f2a ff9955 ffb380 ffccaa ffe6d5 28170b 502d16 784421 a05a2c c87137 d38d5f deaa87 e9c6af f4e3d7 241f1c 483e37 6c5d53 917c6f ac9d93 c8beb7 e3dedb 2b2200 554400 806600 aa8800 d4aa00 ffcc00 ffd42a ffdd55 ffe680 ffeeaa fff6d5 28220b 504416 786721 a0892c'.split(' ');

const menus: [string, number][] = [['File', 25.500], ['Edit', 29], ['View', 35], ['Layer', 37.500], ['Object', 46.500], ['Path', 32.500], ['Text', 31], ['Filters', 44], ['Extensions', 74], ['Help', 32]];
const toolNames = 'select node | rect ellipse star cube spiral | bezier pencil calligraphy text | gradient mesh dropper bucket | tweak spray eraser connector | zoom measure'.split(' ');
const commands = 'new open save print | import export | undo redo | copy cut paste | zsel zdraw zpage zfit | dup clone unclone | group ungroup | fill glyph stack xml'.split(' ');
const snaps = '*snap | snap dim1 dim2 dim1 dim3 | *snap path cross *cusp smooth mid | *snap s1 s2 s3 | page *grid *guide'.split(' ');
const rows: [string, number][] = [['text126', 54], ['text122', 54], ['rect118', 51], ['rect101', 51], ['rect88', 43.500], ['rect65-', 49], ['rect65', 43.500]];

const InkLogo = ({ s }: { s: number }) => (
  <svg width={s} height={s} viewBox="0 0 44 44">
    <path d="M22 1q2 0 5 4l15 15q2 4-4 5-6 2-5 3 2 3-3 4-2 2 1 4-3 5-9 6-4-2-7-4 3-2 1-4-8-2-6-5l10-1q-12-1-17-5-3-3 0-6L17 4q3-3 5-3z" fill="url(#gInk)" stroke="#8b91a0" strokeWidth=".8" />
    <path d="M22 2q2 0 4 3l9 9-4-1-2 4-3-4-3 5-4-4-5 4-3-3z" fill="#eceef2" />
    <path d="M33 34q5-3 8-1-2 4-8 1zM8 35q3-2 5 0-2 2-5 0z" fill="#15151c" stroke="#555b68" strokeWidth=".6" />
  </svg>
);

const dock: { k: string; art: ReactNode; on?: boolean; dot?: boolean }[] = [
  { k: 'mail', art: <svg width="50" height="50" viewBox="0 0 50 50"><circle cx="25" cy="26" r="23" fill="url(#gBird)" /><path d="M9 13Q13 3 23 1q4 3 0 7Q33 5 42 11q6 5 7 13-1 14-10 20-4 4-11 5l-3-2q8-4 10-12-8 3-22-3L8 27Q5 19 9 13z" fill="#2673cf" /><path d="M41 12q5 5 6 12l-4-3 2 7-4-2v7l-4-2-2 7" fill="#2f8fdc" opacity=".7" /><path d="M6 31l5-14q3-2 8-1 10 2 15 2v13l-2 12-19-6q-5-2-7-6z" fill="#fcfcfc" /><path d="M10 17l7 14 17-6" fill="none" stroke="#999" /><path d="M9 20Q8 8 18 5q5-4 6-3 2 3-2 6-6 1-9 9l-3 4z" fill="#3b9fe0" /><circle cx="15" cy="14" r="1.300" fill="#222" /></svg> },
  { k: 'files', art: <svg width="46" height="46" viewBox="0 0 46 46"><rect x="1" y="1" width="44" height="44" rx="5" fill="#a59c87" stroke="#c2bba8" /><path d="M7 12q0-3 3-3h8l4 4h14q3 0 3 3v18H7z" fill="#e7e2da" /><rect x="7" y="14" width="32" height="23" rx="3" fill="#faf8f6" /></svg> },
  { k: 'chrome', dot: true, art: <svg width="46" height="46" viewBox="0 0 46 46"><circle cx="23" cy="23" r="22" fill="#ffcd40" /><path d="M4 12A22 22 0 0142.500 12.500L23 13l-9 15z" fill="#db4437" /><path d="M4 12l10 17 9 5 5-1-6 12A22 22 0 014 12z" fill="#0f9d58" /><circle cx="23" cy="23" r="10" fill="#f1f1f1" /><circle cx="23" cy="23" r="8.500" fill="#4285f4" /></svg> },
  { k: 'rhythmbox', art: <svg width="46" height="46" viewBox="0 0 46 46"><rect x="5" y="1" width="37" height="44" rx="4" fill="#e6e3d6" /><circle cx="23" cy="23" r="16" fill="#2b2b35" /><circle cx="23" cy="23" r="12" fill="#f5b912" stroke="#111" strokeWidth="1.500" /><circle cx="23" cy="23" r="5.500" fill="#222" stroke="#111" /><circle cx="23" cy="23" r="2.500" fill="#666" /></svg> },
  { k: 'writer', art: <svg width="46" height="46" viewBox="0 0 46 46"><path d="M9 1h20l13 14v26q0 4-4 4H9q-4 0-4-4V5q0-4 4-4z" fill="#1a7ab8" /><path d="M5 23h37v18q0 4-4 4H9q-4 0-4-4z" fill="#3f9fd0" /><path d="M32 1h10v10z" fill="#0e6296" /><path d="M10 4h16l13 13v23q0 2-2 2H10q-2 0-2-2V6q0-2 2-2z" fill="#fff" /><path d="M11 18h8M11 22h8M11 26h8M11 30h24M11 34h24M11 38h18" stroke="#1a7ab8" strokeWidth="2" /><path d="M21 17h14v11H21z" fill="#1a6a9e" /><path d="M22 18h12v9H22z" fill="#8cc8ea" /><path d="M22 27l4-5 3 2 2-2 3 5z" fill="#444" /><path d="M31 18h3v3z" fill="#f5b912" /></svg> },
  { k: 'software', art: <svg width="46" height="46" viewBox="0 0 46 46"><path d="M16 10Q16 2 23 2t7 8" fill="none" stroke="#efc9a4" strokeWidth="2.200" /><rect x="1" y="7" width="44" height="37" rx="4" fill="url(#gShop)" /><path d="M13 38l9-22h2l9 22" fill="none" stroke="#fff" strokeWidth="5" strokeLinejoin="round" /><path d="M11 30.500h24" stroke="#fff" strokeWidth="4" strokeLinecap="round" /></svg> },
  { k: 'inkscape', on: true, dot: true, art: <InkLogo s={43} /> },
];

export default function App() {
  return (
    <Screen>
      <Global />
      <Defs />
      <TopBar>
        <Gap $w={11} /><Fit w={66}>Activities</Fit><Gap $w={35} /><InkLogo s={15} /><Gap $w={5} /><Fit w={62}>Inkscape</Fit><Gap $w={6} /><Caret />
        <Gap $w={743} /><Fit w={86}>сеп 9  19:15</Fit><Gap $w={13} /><Dot />
        <Push />
        <svg width="13" height="15" viewBox="0 0 13 15"><path d="M6.500 0L13 2v6q-1 4-6.500 7Q1 12 0 8V2z" fill="#c9c9c9" /><circle cx="9" cy="9" r="4" fill="#2fa84a" /><path d="M7 9l1.500 1.500L11 8" fill="none" stroke="#fff" /></svg>
        <Gap $w={35} />
        <svg width="16" height="15" viewBox="0 0 16 15"><path d="M0 0h15v12l1 3H0z" fill="#f2ec00" /><path d="M2 4h1M5 4h8M2 7h1M5 7h8M2 10h1M5 10h8" stroke="#555500" strokeWidth="1.200" /></svg>
        <Gap $w={35} />
        <svg width="14" height="16" viewBox="0 0 14 16"><path d="M7 0l7 4v8l-7 4-7-4V4z" fill="url(#gJb)" /><path d="M7 7l7-2v7l-7 4z" fill="#111" /><path d="M8.500 12.500l3-1" stroke="#fff" /></svg>
        <Gap $w={35} />
        <svg width="17" height="14" viewBox="0 0 17 14"><path d="M0 4Q8.500-3.500 17 4L8.500 14z" fill="#f2f2f2" /><path d="M1 5.500q7.500-5.500 15 0" fill="none" stroke="#1d1d1d" strokeWidth=".8" /></svg>
        <Gap $w={12} />
        <svg width="16" height="14" viewBox="0 0 16 14"><path d="M0 4h4l4-4v14l-4-4H0z" fill="#f2f2f2" /><path d="M9.500 4.500q2 2.500 0 5" fill="none" stroke="#f2f2f2" /><path d="M11.500 3q3 4 0 8M13.500 1.500q3.500 5.500 0 11" fill="none" stroke="#888" /></svg>
        <Gap $w={12} />
        <svg width="17" height="16" viewBox="0 0 17 16"><path d="M4 4L0 9h2.500L1.500 13 4.500 8H3z" fill="#888" /><path d="M9 1V0h4v1h3v15H6V1z" fill="#f2f2f2" /><path d="M7.500 3h7v11.500h-7z" fill="#e4e4e4" stroke="#333" strokeWidth=".8" /></svg>
        <Gap $w={11} /><Caret /><Gap $w={16} />
      </TopBar>
      <Desktop>
        <Dock>
          {dock.map(d => <DockItem key={d.k} $on={d.on} $dot={d.dot}>{d.art}</DockItem>)}
          <AppGrid>{Array.from({ length: 9 }, (_, i) => <GridDot key={i} />)}</AppGrid>
        </Dock>
        <Win>
          <TitleBar>
            <Gap $w={822.500} /><Fit w={201.500} bold color="#e6e6e6">*New document 1 - Inkscape</Fit><Push />
            <svg width="52" height="12" viewBox="0 0 52 12"><path d="M0 8.500h8" stroke="#fff" /><path d="M34.500 4.500h5v5h-5z" fill="none" stroke="#fff" /><path d="M36.500 2.500h5v5" fill="none" stroke="#999" /></svg>
            <Gap $w={11} /><Close><svg width="8" height="8" viewBox="0 0 8 8"><path d="M.5.5l7 7M7.500.5l-7 7" stroke="#fff" strokeWidth="1.500" /></svg></Close>
          </TitleBar>
          <MenuBar>{menus.map(([m, w]) => <Fit key={m} w={w}>{m}</Fit>)}</MenuBar>
          <ToolBar>
            {['all', 'layers', 'desel'].map(n => <Slot key={n} $w={31}><Icon n={n} /></Slot>)}<VSep />
            {['ccw', 'cw', 'fliph', 'flipv'].map(n => <Slot key={n} $w={31}><Icon n={n} /></Slot>)}<VSep />
            {['bottom', 'lower', 'raise', 'top'].map(n => <Slot key={n} $w={31}><Icon n={n} /></Slot>)}<VSep />
            <Tag $w={19.500} $pl={3}><Fit w={12.500}>X:</Fit></Tag><Spin w={164} bw={29} pl={7.500} tw={45} v="36,419" />
            <Tag $w={22} $pl={6}><Fit w={12}>Y:</Fit></Tag><Spin w={164} bw={29} pl={7.500} tw={53} v="267,787" />
            <Tag $w={28} $pl={6}><Fit w={18}>W:</Fit></Tag><Spin w={160} bw={29} pl={7.500} tw={54} v="442,415" />
            <Slot $w={38}><Icon n="unlock" /></Slot>
            <Tag $w={17} $pl={0}><Fit w={14}>H:</Fit></Tag><Spin w={160} bw={29} pl={7.500} tw={53} v="149,048" /><Gap $w={4} />
            <Combo $w={60} $pl={7.500} $pr={9}><Fit w={27}>mm</Fit><Caret /></Combo><VSep $w={15} />
            <ToggleRow>{['a1', 'a2', 'a3', 'a4'].map(n => <Toggle key={n} $on><Icon n={n} /></Toggle>)}</ToggleRow>
          </ToolBar>
          <Work>
            <ToolBox>
              {toolNames.map((n, i) => (n === '|' ? <ToolSep key={i} /> : <Toggle key={i} $w={37} $on={n === 'select'}><ToolIcon n={n} /></Toggle>))}
            </ToolBox>
            <Stage>
              <Corner><Icon n="redLock" s={15} /></Corner>
              <HRuler />
              <Sticky><svg width="8" height="10" viewBox="0 0 8 10"><path d="M1.500 2.500l1.500-2h3.500v9h-3.500V4H1.500z" fill="#fff" stroke="#777" /></svg></Sticky>
              <VRuler />
              <Canvas>
                <Page />
                {shapes.map(([x, y, w, h, c], i) => <Shape key={i} $x={x} $y={y} $w={w} $h={h} $c={c} />)}
                {words.map(([t, x0, x1, y, s], i) => (
                  <Written key={i} $x={x0} $y={y} $s={s}><Fit w={x1 - x0 + s * 0.09} size={s} color="#000" sans='"DejaVu Sans", sans-serif'>{t}</Fit></Written>
                ))}
                <Shape $x={185.500} $y={653.300} $w={1170} $h={400} $c="#ff0000" />
                <Outline width="1172" height="345"><path d="M.5 345V.5h1170V345" fill="none" stroke="#ffd0d0" /><path d="M.5 345V.5h1170V345" fill="none" stroke="#3a1f9a" strokeDasharray="4 4" /></Outline>
                {handles.map(([x, y, r, c], i) => <Handle key={i} $x={x} $y={y} $r={r} width="16" height="16" viewBox="0 0 16 16"><path d={r % 90 ? 'M.5 8L6 2v3.500h4V2l5.500 6L10 14v-3.500H6V14z' : 'M1.500 8l5-5v3h3V3l5 5-5 5v-3h-3v3z'} fill={c} /></Handle>)}
              </Canvas>
              <Trough $v><Thumb $w={6} $h={333} /></Trough>
              <span />
              <Trough><Thumb $w={480} $h={6} /></Trough>
              <Corner><Icon n="cms" s={15} /></Corner>
            </Stage>
            <Panel>
              <PanelHead>
                <svg width="15" height="14" viewBox="0 0 15 14"><path d="M2 0h9l-2 3H0zM4 5.500h9l-2 3H2zM6 11h9l-2 3H4z" fill="#050505" /></svg><Gap $w={1} /><Fit w={52}>Objects</Fit><Gap $w={115} />
                <SmallBtn><svg width="6" height="6"><path d="M5 0v6L0 3z" fill="#bbb" /></svg></SmallBtn><Gap $w={19} />
                <SmallBtn><svg width="7" height="7"><path d="M1 1l5 5M6 1L1 6" stroke="#ccc" strokeWidth="1.800" /></svg></SmallBtn>
              </PanelHead>
              <Frame>
                <Table>
                  <THead>{([['V', 10], ['L', 8], ['T', 9], ['CM', 24], ['HL', 20], ['Label', 40]] as [string, number][]).map(([t, w]) => <Th key={t}><Fit w={w} bold size={14} color="#a0a0a0">{t}</Fit></Th>)}</THead>
                  <TBody>
                    {rows.map(([t, w]) => {
                      const on = t === 'rect101';
                      return (
                        <Tr key={t} $on={on}><Icon n="eye" /><Icon n="unlock" />
                          <TypeCell>
                            <svg width="16" height="16" viewBox="0 0 16 16"><text x=".5" y="7.500" fontSize="9" fontFamily={ui} fill="#0c0c0c" textLength="14.500" lengthAdjust="spacingAndGlyphs">abc</text><path d="M1 10h9.500l4.500 5.300H5.500z" fill="#fff" stroke="#000" strokeWidth=".8" /></svg>
                          </TypeCell>
                          <HighlightCell><Highlight $on={on} /></HighlightCell><span /><LabelCell><Fit w={w}>{t}</Fit></LabelCell></Tr>
                      );
                    })}
                  </TBody>
                </Table>
                <Actions><Slot $w={30}><Icon n="plus" /></Slot><Slot $w={30}><Icon n="minus" /></Slot><Gap $w={17.500} />{['collapse', 'toTop', 'up', 'down', 'toBottom'].map(n => <Slot key={n} $w={29.900}><Icon n={n} /></Slot>)}</Actions>
                <Blend><Fit w={84}>Blend mode:</Fit><Combo $w={118} $h={30} $pl={7.500} $pr={9}><Fit w={52}>Normal</Fit><Caret /></Combo></Blend>
                <HRule />
                <Slider><span><Fit w={53}>Blur (%)</Fit></span><SliderVal><Fit w={21}>0,0</Fit></SliderVal><SliderBtn><Minus dim /></SliderBtn><SliderBtn><Plus /></SliderBtn></Slider>
                <Slider $full><span><Fit w={78}>Opacity (%)</Fit></span><SliderVal><Fit w={36}>100,0</Fit></SliderVal><SliderBtn><Minus /></SliderBtn><SliderBtn><Plus dim /></SliderBtn></Slider>
              </Frame>
            </Panel>
            <Tabs>
              <TabText $h={229}><Fit w={229}>Align and Distribute (Shift+Ctrl+A)</Fit></TabText>
              <svg width="16" height="16" viewBox="0 0 16 16"><path d="M.5 0v16" stroke="#c00" /><path d="M2 1h5v3H2zM2 6h13v3.500H2zM3 12h9v3.500H3z" fill="#a9c6e2" stroke="#fff" strokeWidth=".6" /></svg>
              <Gap $w={1} />
              <TabText $h={145}><Fit w={138}>Layers (Shift+Ctrl+L)</Fit></TabText>
              <svg width="16" height="14" viewBox="0 0 16 14"><path d="M0 1q2-1 3 1v7l2 3H1zM4 1q2-1 3 1v7l2 3H5zM8 1h5l2 11H9z" fill="#fff" stroke="#222" strokeWidth=".7" /></svg>
            </Tabs>
            <Strip $w={34}>
              {commands.map((n, i) => (n === '|' ? <StripSep key={i} /> : <StripCell key={i}><Icon n={n} s={['import', 'export', 'undo', 'redo'].includes(n) ? 21 : 16} /></StripCell>))}
              <svg width="8" height="48" viewBox="0 0 8 48"><path d="M2 18v11l5-5.500z" fill="#fff" /></svg>
            </Strip>
            <Strip $w={42}>
              {snaps.map((n, i) => (n === '|' ? <StripSep key={i} /> : <StripCell key={i} $on={n[0] === '*'}><Icon n={n.replace('*', '')} /></StripCell>))}
            </Strip>
          </Work>
          <Palette>
            <Swatches>
              <svg width="19" height="17"><path d="M0 0h19v17H0z" fill="#fff" /><path d="M0 0l19 17M19 0L0 17" stroke="#7a1515" strokeWidth="1.500" /></svg>
              {palette.map((c, i) => <Swatch key={i} $c={'#' + c} />)}
            </Swatches>
            <Gap $w={12} /><svg width="6" height="11" viewBox="0 0 6 11"><path d="M5.500 0v11L0 5.500z" fill="#fff" /></svg>
          </Palette>
          <PaletteScroll><Thumb $w={396} $h={6} /></PaletteScroll>
          <Status>
            <FillStroke>
              <FsRow><Fit w={23}>Fill:</Fit><Gap $w={30} /><FillColor /></FsRow>
              <FsRow><Fit w={49}>Stroke:</Fit><Gap $w={3.500} /><Fit w={42} bold>Unset</Fit><Gap $w={3} /><Fit w={36}>0,265</Fit></FsRow>
            </FillStroke>
            <Tag $w={17} $pl={0}><Fit w={15}>O:</Fit></Tag><Spin w={106} h={34} bw={29.500} pl={8} tw={24.500} v="100" dimPlus />
            <Gap $w={11} /><Faded><Icon n="eye" /></Faded><Gap $w={14} /><Faded><Icon n="unlock" /></Faded><Gap $w={7} />
            <Combo $w={88} $h={34} $pl={14.500} $pr={9}><Fit w={33}>(root)</Fit><Caret /></Combo>
            <Gap $w={1} /><Fit w={73} bold>Rectangle</Fit><Gap $w={5.500} /><Fit w={448.500}>in root. Click selection to toggle scale/rotation handles (or Shift+s).</Fit>
            <Push />
            <Coord>
              <FsRow><Fit w={14}>X:</Fit><Gap $w={12} /><Fit w={45}>296,60</Fit></FsRow>
              <FsRow><Fit w={13}>Y:</Fit><Gap $w={13} /><Fit w={45}>289,39</Fit></FsRow>
            </Coord>
            <Tag $w={23} $pl={0}><Fit w={13}>Z:</Fit></Tag><Spin w={100} h={34} bw={21.500} pl={10.500} tw={28.500} v="70%" />
            <Tag $w={33} $pl={10.500}><Fit w={13}>R:</Fit></Tag><Spin w={108} h={34} bw={21.500} pl={12.500} tw={34} v="0,00°" /><Gap $w={10.500} />
          </Status>
        </Win>
      </Desktop>
    </Screen>
  );
}
